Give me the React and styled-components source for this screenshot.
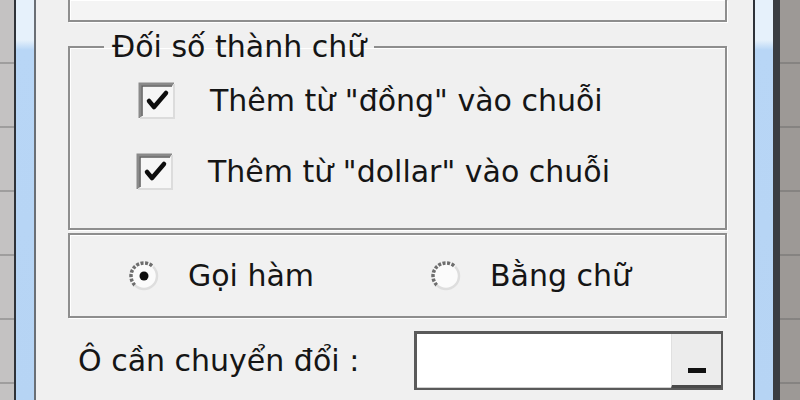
import styled, { createGlobalStyle } from 'styled-components';

const GlobalStyle = createGlobalStyle`
  html, body {
    margin: 0;
    padding: 0;
    width: 800px;
    height: 400px;
    overflow: hidden;
    background: #c9c6c4;
  }
  body {
    font-family: "DejaVu Sans", Tahoma, sans-serif;
    color: #151515;
  }
`;

const Screen = styled.div`
  display: flex;
  width: 800px;
  height: 400px;
`;

const SheetGrid = styled.div`
  width: ${props => props.w}px;
  background-color: ${props => props.bg};
  background-image: repeating-linear-gradient(
    to bottom,
    transparent 0,
    transparent 62px,
    rgba(90, 90, 90, 0.35) 62px,
    rgba(90, 90, 90, 0.35) 64px
  );
`;

const WindowEdge = styled.div`
  width: 18px;
  border-left: 2px solid #2e3238;
  border-right: ${props => props.outer ? 7 : 2}px solid ${props => props.outer ? '#3a3d42' : '#6a6f75'};
  background: linear-gradient(to bottom, #e6f1fb 0, #e6f1fb 40px, #b8d6f6 50px, #b6d4f4 100%);
`;

const Dialog = styled.div`
  flex: 1;
  background: #f0f0f0;
  padding: 0 26px 0 32px;
  display: flex;
  flex-direction: column;
  font-size: 30px;
`;

const Frame = styled.div`
  border: 2px solid #8e8e8e;
  box-shadow: inset 1px 1px 0 #ffffff, 1px 1px 0 #ffffff;
  background: #f1f1f1;
`;

const TopFrame = styled(Frame)`
  height: 20px;
  border-top: none;
  background: #f4f4f4;
`;

const Group = styled.fieldset`
  margin: 10px 0 0 0;
  padding: 20px 0 0 0;
  height: 174px;
  box-sizing: content-box;
  border: 2px solid #8e8e8e;
  box-shadow: inset 1px 1px 0 #ffffff, 1px 1px 0 #ffffff;
  display: flex;
  flex-direction: column;
  gap: 33px;
`;

const Legend = styled.legend`
  margin-left: 34px;
  padding: 0 8px;
  line-height: 30px;
`;

const OptionRow = styled.label`
  display: flex;
  align-items: center;
  gap: 34px;
  line-height: 38px;
  margin-left: ${props => props.shift}px;
`;

const RadioFrame = styled(Frame)`
  margin-top: 3px;
  height: 81px;
  display: grid;
  grid-template-columns: 302px auto;
  align-items: center;
  padding-left: 58px;
`;

const RadioItem = styled.label`
  display: flex;
  align-items: center;
  gap: 28px;
`;

const FieldRow = styled.div`
  margin-top: 13px;
  display: flex;
  align-items: center;
  padding-left: 10px;
`;

const FieldLabel = styled.span`
  width: 336px;
`;

const RefBox = styled.div`
  width: 304px;
  height: 54px;
  display: flex;
  justify-content: flex-end;
  background: #ffffff;
  border: 2px solid #5a5a5a;
  border-top-width: 3px;
  border-left-width: 3px;
  box-shadow: inset -1px -1px 0 #cfcfcf;
`;

const CollapseButton = styled.div`
  width: 50px;
  display: flex;
  align-items: flex-end;
  justify-content: center;
  padding-bottom: 12px;
  box-sizing: border-box;
  background: #ececec;
  border-left: 1px solid #e0e0e0;
  border-bottom: 3px solid #4a4a4a;

  &::after {
    content: "";
    width: 18px;
    height: 5px;
    background: #111;
  }
`;

const CheckBox = () => (
  <svg width="38" height="38" viewBox="0 0 38 38">
    <rect x="1" y="1" width="36" height="36" fill="#f6f6f6" />
    <path d="M2 36 V2 H36" fill="none" stroke="#8a8a8a" strokeWidth="3" />
    <path d="M4 34 V4 H34" fill="none" stroke="#5d5d5d" strokeWidth="1.5" />
    <path d="M2 36 H36 V2" fill="none" stroke="#dcdcdc" strokeWidth="2" />
    <path d="M11 19 L16 25 L28 11" fill="none" stroke="#0d0d0d" strokeWidth="4.5" strokeLinecap="round" strokeLinejoin="round" />
  </svg>
);

const RadioDot = ({ on }) => (
  <svg width="32" height="32" viewBox="0 0 32 32">
    <circle cx="16" cy="16" r="13" fill="#fbfbfb" />
    <path d="M6.8 25.2 A13 13 0 0 1 25.2 6.8" fill="none" stroke="#6e6e6e" strokeWidth="3.5" strokeDasharray="3 1.5" />
    <path d="M25.2 6.8 A13 13 0 0 1 6.8 25.2" fill="none" stroke="#dedede" strokeWidth="2.5" />
    {on && <circle cx="16" cy="16" r="4.5" fill="#0d0d0d" />}
  </svg>
);

const App = () => (
  <>
    <GlobalStyle />
    <Screen>
      <SheetGrid w={14} bg="#c4c2c2" />
      <WindowEdge />
      <Dialog>
        <TopFrame />
        <Group>
          <Legend>Đối số thành chữ</Legend>
          <OptionRow shift={68}>
            <CheckBox />
            <span>Thêm từ "đồng" vào chuỗi</span>
          </OptionRow>
          <OptionRow shift={66}>
            <CheckBox />
            <span>Thêm từ "dollar" vào chuỗi</span>
          </OptionRow>
        </Group>
        <RadioFrame>
          <RadioItem>
            <RadioDot on />
            <span>Gọi hàm</span>
          </RadioItem>
          <RadioItem>
            <RadioDot />
            <span>Bằng chữ</span>
          </RadioItem>
        </RadioFrame>
        <FieldRow>
          <FieldLabel>Ô cần chuyển đổi :</FieldLabel>
          <RefBox>
            <CollapseButton />
          </RefBox>
        </FieldRow>
      </Dialog>
      <WindowEdge outer />
      <SheetGrid w={20} bg="#9d9996" />
    </Screen>
  </>
);

export default App;
